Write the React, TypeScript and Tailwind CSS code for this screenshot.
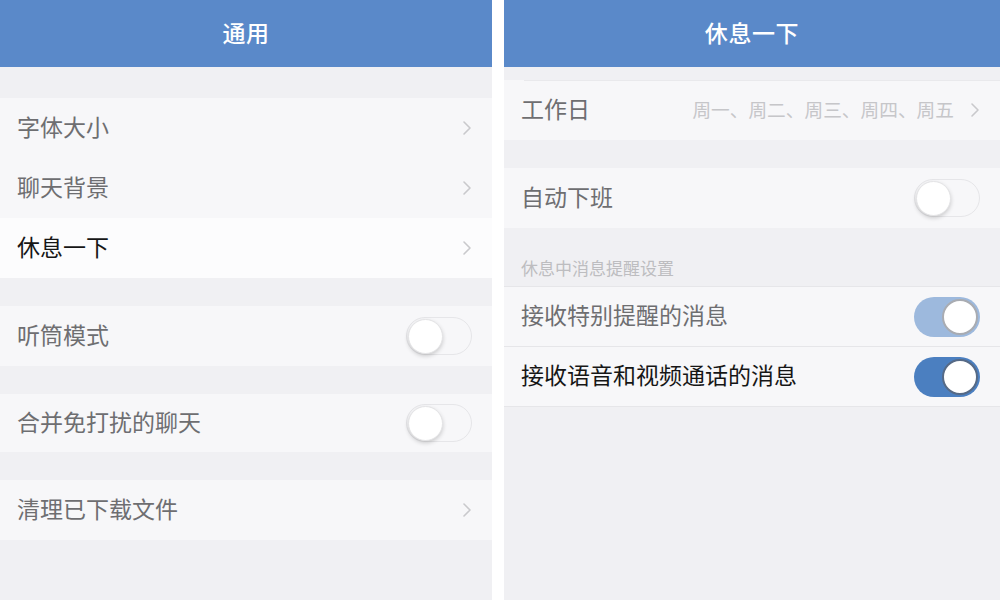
import React from 'react';

const font = { fontFamily: '"Noto Sans CJK SC", "Noto Sans", sans-serif' };

const Chevron = () => (
  <svg width="10" height="16" viewBox="0 0 10 16" className="shrink-0">
    <path d="M2 2l6 6-6 6" fill="none" stroke="#c9c9cc" strokeWidth="1.6" strokeLinecap="round" strokeLinejoin="round" />
  </svg>
);

type ToggleProps = { on?: boolean; dim?: boolean };

const Toggle: React.FC<ToggleProps> = ({ on, dim }) => {
  if (!on) {
    return (
      <div className="w-[66px] h-[38px] rounded-full border border-[#e6e6e9] bg-[#f7f7f9] flex items-center p-[1px]">
        <span className="w-[35px] h-[35px] rounded-full bg-white shadow-[0_2px_4px_rgba(0,0,0,0.18)] border border-[#e4e4e6]" />
      </div>
    );
  }
  return (
    <div
      className={
        dim
          ? 'w-[66px] h-[40px] rounded-full bg-[#9db9dd] flex items-center justify-end p-[2px]'
          : 'w-[66px] h-[40px] rounded-full bg-[#4b7fc0] flex items-center justify-end p-[2px]'
      }
    >
      <span
        className={
          dim
            ? 'w-[36px] h-[36px] rounded-full bg-white border-2 border-[#a9acb2]'
            : 'w-[36px] h-[36px] rounded-full bg-white border-2 border-[#566a86]'
        }
      />
    </div>
  );
};

type RowProps = {
  label: string;
  dark?: boolean;
  bright?: boolean;
  h?: string;
  children?: React.ReactNode;
};

const Row: React.FC<RowProps> = ({ label, dark, bright, h = 'h-[60px]', children }) => (
  <div className={`${h} flex items-center justify-between pl-[17px] pr-[20px] ${bright ? 'bg-[#fcfcfd]' : 'bg-[#f7f7f9]'}`}>
    <span className={`text-[23px] leading-none mb-[4px] ${dark ? 'text-[#161616]' : 'text-[#6e6e71]'}`}>{label}</span>
    {children}
  </div>
);

const Header: React.FC<{ title: string }> = ({ title }) => (
  <div className="h-[67px] bg-[#5a89c9] flex items-center justify-center">
    <span className="text-white text-[23px] leading-none mb-[2px] font-medium tracking-wide">{title}</span>
  </div>
);

const GeneralPanel = () => (
  <div className="w-[492px] h-full flex flex-col bg-[#f0f0f3]">
    <Header title="通用" />
    <div className="h-[31px]" />
    <Row label="字体大小"><Chevron /></Row>
    <Row label="聊天背景"><Chevron /></Row>
    <Row label="休息一下" dark bright><Chevron /></Row>
    <div className="h-[28px]" />
    <Row label="听筒模式"><Toggle /></Row>
    <div className="h-[28px]" />
    <Row label="合并免打扰的聊天" h="h-[58px]"><Toggle /></Row>
    <div className="h-[28px]" />
    <Row label="清理已下载文件"><Chevron /></Row>
  </div>
);

const BreakPanel = () => (
  <div className="flex-1 h-full flex flex-col bg-[#f0f0f3]">
    <Header title="休息一下" />
    <div className="h-[13px]" />
    <div className="bg-[#f7f7f9] pl-[20px]">
      <div className="h-px bg-[#e9e9ec]" />
    </div>
    <Row label="工作日" h="h-[59px]">
      <div className="flex items-center gap-[16px]">
        <span className="text-[18.7px] leading-none mb-[3px] text-[#c6c6c9]">周一、周二、周三、周四、周五</span>
        <Chevron />
      </div>
    </Row>
    <div className="h-[28px]" />
    <Row label="自动下班"><Toggle /></Row>
    <div className="h-[58px] flex items-end pl-[17px] pb-[10px]">
      <span className="text-[17px] leading-none text-[#bdbdc0]">休息中消息提醒设置</span>
    </div>
    <div className="h-px bg-[#e6e6e9]" />
    <Row label="接收特别提醒的消息" h="h-[59px]"><Toggle on dim /></Row>
    <div className="h-px bg-[#e6e6e9]" />
    <Row label="接收语音和视频通话的消息" dark h="h-[59px]"><Toggle on /></Row>
    <div className="h-px bg-[#e6e6e9]" />
  </div>
);

export default function App() {
  return (
    <div className="w-[1000px] h-[600px] flex bg-white overflow-hidden" style={font}>
      <GeneralPanel />
      <div className="w-[12px] bg-white" />
      <BreakPanel />
    </div>
  );
}
